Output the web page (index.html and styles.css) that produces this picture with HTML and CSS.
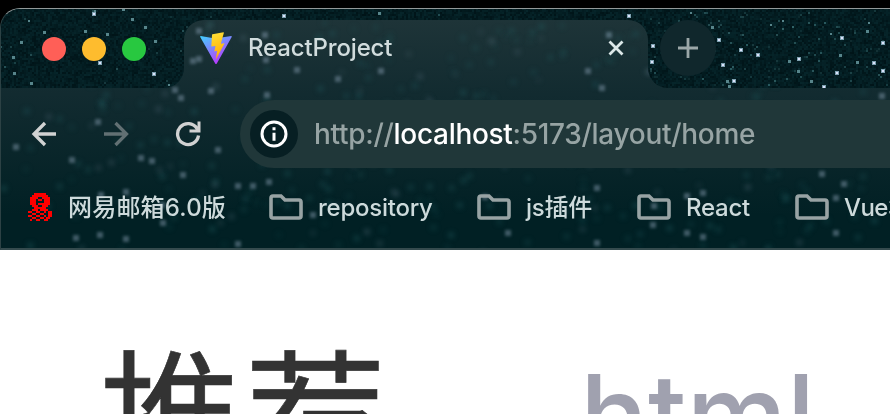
FILE: index.html
```html
<!DOCTYPE html>
<html lang="zh-CN">
<head>
<meta charset="utf-8">
<title>ReactProject</title>
<link rel="stylesheet" href="styles.css">
</head>
<body>
<div class="window">
  <canvas class="theme" width="890" height="242"></canvas>
  <header class="tabstrip">
    <div class="lights"><i class="light red"></i><i class="light yellow"></i><i class="light green"></i></div>
    <div class="tab">
      <svg class="vite" viewBox="0 0 32 32">
        <defs>
          <linearGradient id="v" x1="0" y1="0" x2=".6" y2="1"><stop stop-color="#41d1ff"/><stop offset="1" stop-color="#bd34fe"/></linearGradient>
          <linearGradient id="b" x1=".4" y1="0" x2=".6" y2="1"><stop stop-color="#ffdd35"/><stop offset="1" stop-color="#ffa800"/></linearGradient>
        </defs>
        <path fill="url(#v)" d="M.7 4 15 6.500 31.300 4Q32 4 31.700 4.900L16.800 31.500Q16 32.500 15.200 31.500L.2 4.900Q0 4 .7 4Z"/>
        <path fill="url(#b)" d="M23.500.2 12.500 2.300Q12 2.400 12 3L11.300 14.500 15.500 14 14.300 19.500 17.100 18.700 15.900 27.500 24.600 11.200 20.800 11.800 23.900.8Z"/>
      </svg>
      <span class="tab-title">ReactProject</span>
      <svg class="close" viewBox="0 0 16 16"><path d="M1.500 1.500l13 13M14.500 1.500l-13 13"/></svg>
    </div>
    <div class="new-tab"><svg viewBox="0 0 20 20"><path d="M10 0v20M0 10h20"/></svg></div>
  </header>
  <nav class="toolbar">
    <svg class="nav-icon" viewBox="0 0 26 26"><path d="M25 13H3.500M14 2 3 13l11 11"/></svg>
    <svg class="nav-icon forward" viewBox="0 0 26 26"><path d="M1 13h22.500M12.500 2l11 11-11 11"/></svg>
    <svg class="nav-icon reload" viewBox="0 0 26 26"><path d="M23.500 14.500A10.500 10.500 0 1 1 22 7.500"/><path class="solid" d="M25.500.5v11h-11V8.500h6L22.500 5V.5Z"/></svg>
    <div class="omnibox">
      <span class="info"><svg viewBox="0 0 28 28"><circle cx="14" cy="14" r="12"/><path d="M14 12.700v8M14 7.300v3"/></svg></span>
      <span class="url">http://<b>localhost</b>:5173/layout/home</span>
    </div>
  </nav>
  <div class="bookmarks">
    <span class="bookmark mail"><svg class="mail-icon" viewBox="0 0 12 14" shape-rendering="crispEdges"></svg><span class="cn">网易邮箱6.0版</span></span>
    <span class="bookmark repo"><svg class="folder" viewBox="0 0 34 26"><path d="M4 2h8l4 4h14q2 0 2 2v14q0 2-2 2H4q-2 0-2-2V4q0-2 2-2Z"/></svg><span>repository</span></span>
    <span class="bookmark js"><svg class="folder" viewBox="0 0 34 26"><path d="M4 2h8l4 4h14q2 0 2 2v14q0 2-2 2H4q-2 0-2-2V4q0-2 2-2Z"/></svg><span class="cn-js">js插件</span></span>
    <span class="bookmark react"><svg class="folder" viewBox="0 0 34 26"><path d="M4 2h8l4 4h14q2 0 2 2v14q0 2-2 2H4q-2 0-2-2V4q0-2 2-2Z"/></svg><span>React</span></span>
    <span class="bookmark vue"><svg class="folder" viewBox="0 0 34 26"><path d="M4 2h8l4 4h14q2 0 2 2v14q0 2-2 2H4q-2 0-2-2V4q0-2 2-2Z"/></svg><span>Vue3</span></span>
  </div>
</div>
<main class="page"><span class="active">推荐</span><span class="item">html</span></main>
<script src="theme.js"></script>
</body>
</html>
```
FILE: styles.css
```css
* { box-sizing: border-box; }
body { margin: 0; width: 890px; height: 414px; overflow: hidden; background: #fff; font-family: Inter, "Noto Sans CJK SC", sans-serif; font-weight: 500; }
body::before { content: ""; position: absolute; z-index: -1; left: 0; top: 0; width: 890px; height: 40px; background: #000; }
.window { position: relative; height: 242px; margin-top: 8px; border-top: 1px solid #929999; border-left: 1px solid #2c4144; border-top-left-radius: 20px; border-bottom: 2px solid #354b4e; overflow: hidden; background: #012024; }
.theme { position: absolute; left: -1px; top: -1px; }
.tabstrip { position: relative; height: 79px; display: flex; padding-left: 41px; }
.lights { display: flex; gap: 16px; width: 142px; padding-top: 28px; }
.light { width: 24px; height: 24px; border-radius: 50%; }
.red { background: #ff5f57; }
.yellow { background: #febc2e; }
.green { background: #28c840; }
.tab { width: 464px; height: 68px; margin-top: 11px; padding: 0 24px 12px 16px; display: flex; align-items: center; }
.vite { width: 32px; height: 32px; }
.tab-title { margin-left: 16px; flex: 1; font-size: 24px; line-height: 32px; letter-spacing: -.15px; color: #d1dcdd; white-space: nowrap; }
.close { width: 16px; height: 16px; fill: none; stroke: #dce8e8; stroke-width: 2.800; }
.new-tab { width: 56px; height: 56px; margin: 11px 0 0 12px; border-radius: 50%; background: #10272c; display: flex; align-items: center; justify-content: center; }
.new-tab svg { width: 20px; height: 20px; stroke: #9ba7a8; stroke-width: 2.800; }
.toolbar { position: relative; height: 80px; display: flex; align-items: center; padding: 0 0 0 30px; margin-top: 6px; }
.nav-icon { width: 26px; height: 26px; margin-right: 46px; flex: none; fill: none; stroke: #d1d2d2; stroke-width: 3.300; }
.nav-icon .solid { fill: #d1d2d2; stroke: none; }
.forward { stroke: #627073; }
.reload { margin-right: 39px; }
.omnibox { flex: 1; height: 68px; border-radius: 34px 0 0 34px; background: #203739; display: flex; align-items: center; padding-left: 10px; }
.info { width: 48px; height: 48px; border-radius: 50%; background: #071f23; display: flex; align-items: center; justify-content: center; }
.info svg { width: 28px; height: 28px; fill: none; stroke: #fff; stroke-width: 3; }
.url { margin-left: 16px; font-size: 28px; line-height: 40px; letter-spacing: -.3px; color: #97a4a4; white-space: nowrap; }
.url b { font-weight: 500; color: #fff; }
.bookmarks { position: relative; height: 66px; display: flex; align-items: center; padding-left: 27px; font-size: 24px; line-height: 36px; letter-spacing: -.25px; color: #cddadb; white-space: nowrap; }
.bookmark { display: flex; align-items: center; flex: none; height: 36px; }
.bookmark.mail { width: 241px; }
.bookmark.repo { width: 208px; }
.bookmark.js { width: 160px; }
.bookmark.react { width: 158px; }
.bookmark.vue { letter-spacing: -.6px; }
.bookmark > span { padding-top: 1px; }
.bookmark > .cn, .bookmark > .cn-js { padding-top: 2px; }
.cn { letter-spacing: .2px; }
.mail-icon { width: 24px; height: 28px; margin-right: 16px; fill: #f00; }
.folder { width: 34px; height: 26px; margin-right: 15px; fill: none; stroke: #98a3a4; stroke-width: 3.600; }
.page { height: 164px; display: flex; padding-left: 100px; overflow: hidden; white-space: nowrap; }
.active { width: 480px; font: 400 141px/200px "Noto Sans CJK SC", sans-serif; letter-spacing: 4px; color: #333; padding-top: 58px; -webkit-text-stroke: .6px #333; }
.item { font: 500 113px/140px Inter, sans-serif; color: #a0a1af; padding-top: 95px; }
```
FILE: theme.js
```js
const canvas = document.querySelector('.theme');
const c = canvas.getContext('2d');
c.translate(0, -8);

let seed = 41;
const rnd = () => (seed = (seed * 16807) % 2147483647) / 2147483647;

// Sharp star field behind the tab strip.
c.fillStyle = '#011b1f';
c.fillRect(0, 8, 890, 80);
for (let y = 8; y < 88; y += 2) {
  for (let x = 0; x < 890; x += 2) {
    const d = rnd();
    c.fillStyle = `rgba(${Math.round(d * 12)},${Math.round(14 + d * 34)},${Math.round(18 + d * 36)},.5)`;
    c.fillRect(x, y, 2, 2);
  }
}
for (let i = 0; i < 200; i++) {
  const x = i < 80 ? rnd() * 890 : 650 + rnd() * 240;
  c.fillStyle = `rgba(90,160,165,${0.1 + rnd() * 0.35})`;
  c.fillRect(x & ~1, (10 + rnd() * 76) & ~1, 2, 2);
}
const stars = [
  [92, 12, 4], [94, 10, 2], [122, 8, 3], [131, 18, 3], [144, 26, 3], [84, 30, 3], [43, 31, 3], [20, 41, 3], [28, 20, 2], [12, 56, 3], [13, 72, 3], [30, 82, 3], [152, 72, 4], [154, 40, 3], [168, 84, 2], [98, 61, 4], [106, 33, 3],
  [282, 14, 4], [378, 12, 3], [627, 14, 4], [690, 12, 2], [651, 44, 4], [650, 60, 4], [711, 26, 3], [717, 38, 4], [739, 48, 4], [756, 53, 4], [721, 63, 4], [797, 57, 4], [788, 60, 3], [797, 70, 3], [835, 71, 4], [810, 80, 3], [822, 85, 4], [732, 79, 4], [726, 80, 3], [728, 85, 3],
  [840, 36, 4], [866, 30, 3], [881, 41, 4], [872, 61, 4], [881, 69, 4], [839, 54, 3], [856, 61, 3], [770, 24, 2], [782, 20, 2], [830, 33, 2], [868, 22, 2]
];
for (const [x, y, s] of stars) {
  c.fillStyle = s === 4 ? '#7fa2b2' : '#57858b';
  c.fillRect(x, y, s, s);
  if (s === 4) { c.fillStyle = '#dce2fa'; c.fillRect(x + 1, y + 1, 2, 2); }
}

// Frosted surface shared by the active tab and the toolbar.
c.save();
c.beginPath();
c.moveTo(0, 88);
c.lineTo(164, 88);
c.arcTo(184, 88, 184, 68, 20);
c.lineTo(184, 40);
c.arcTo(184, 20, 204, 20, 20);
c.lineTo(628, 20);
c.arcTo(648, 20, 648, 40, 20);
c.lineTo(648, 68);
c.arcTo(648, 88, 668, 88, 20);
c.lineTo(890, 88);
c.lineTo(890, 250);
c.lineTo(0, 250);
c.closePath();
c.clip();
const g = c.createLinearGradient(0, 20, 0, 215);
g.addColorStop(0, '#1e3438');
g.addColorStop(0.38, '#122b30');
g.addColorStop(1, '#012024');
c.fillStyle = g;
c.fillRect(0, 20, 890, 230);
c.filter = 'blur(2.5px)';
for (let i = 0; i < 380; i++) {
  const x = rnd() * 890, y = 20 + rnd() * 230;
  c.fillStyle = i % 4 ? `rgba(34,94,98,${0.1 + rnd() * 0.3})` : `rgba(105,128,145,${0.08 + rnd() * 0.2})`;
  c.fillRect(x, y, 6, 6);
}
c.filter = 'blur(1.5px)';
const soft = [
  [199, 31], [193, 61], [199, 59], [265, 35], [266, 60], [297, 70], [211, 91], [267, 95], [381, 71], [338, 79], [98, 122], [181, 98], [175, 90], [141, 158], [152, 161], [218, 150], [183, 175], [72, 160], [16, 147], [609, 35], [588, 71], [602, 88], [882, 96],
  [162, 205], [163, 223], [101, 195], [100, 235], [126, 192], [126, 239], [76, 238], [238, 186], [253, 186], [238, 244], [313, 215], [269, 182], [508, 233], [485, 197], [654, 206], [653, 225], [687, 196], [687, 233], [703, 193], [703, 237], [836, 198], [836, 233], [844, 184], [822, 174], [597, 188], [597, 243]
];
c.fillStyle = 'rgba(125,150,168,.5)';
for (const [x, y] of soft) c.fillRect(x - 3, y - 3, 6, 6);
c.restore();

// Mail favicon on a 12 x 14 grid.
const rows = [
  '...######...',
  '..########..',
  '.####..####.',
  '.###.##.###.',
  '.###....###.',
  '.###.######.',
  '..###..###..',
  '...######...',
  '..###.####..',
  '##..##..#.##',
  '..##..##..##',
  '##..##..#.##',
  '..##..##.##.',
  '.#..##..##..'
];
const icon = document.querySelector('.mail-icon');
rows.forEach((row, y) => [...row].forEach((v, x) => {
  if (v !== '#') return;
  const r = document.createElementNS('http://www.w3.org/2000/svg', 'rect');
  r.setAttribute('x', x);
  r.setAttribute('y', y);
  r.setAttribute('width', 1);
  r.setAttribute('height', 1);
  icon.append(r);
}));
```
